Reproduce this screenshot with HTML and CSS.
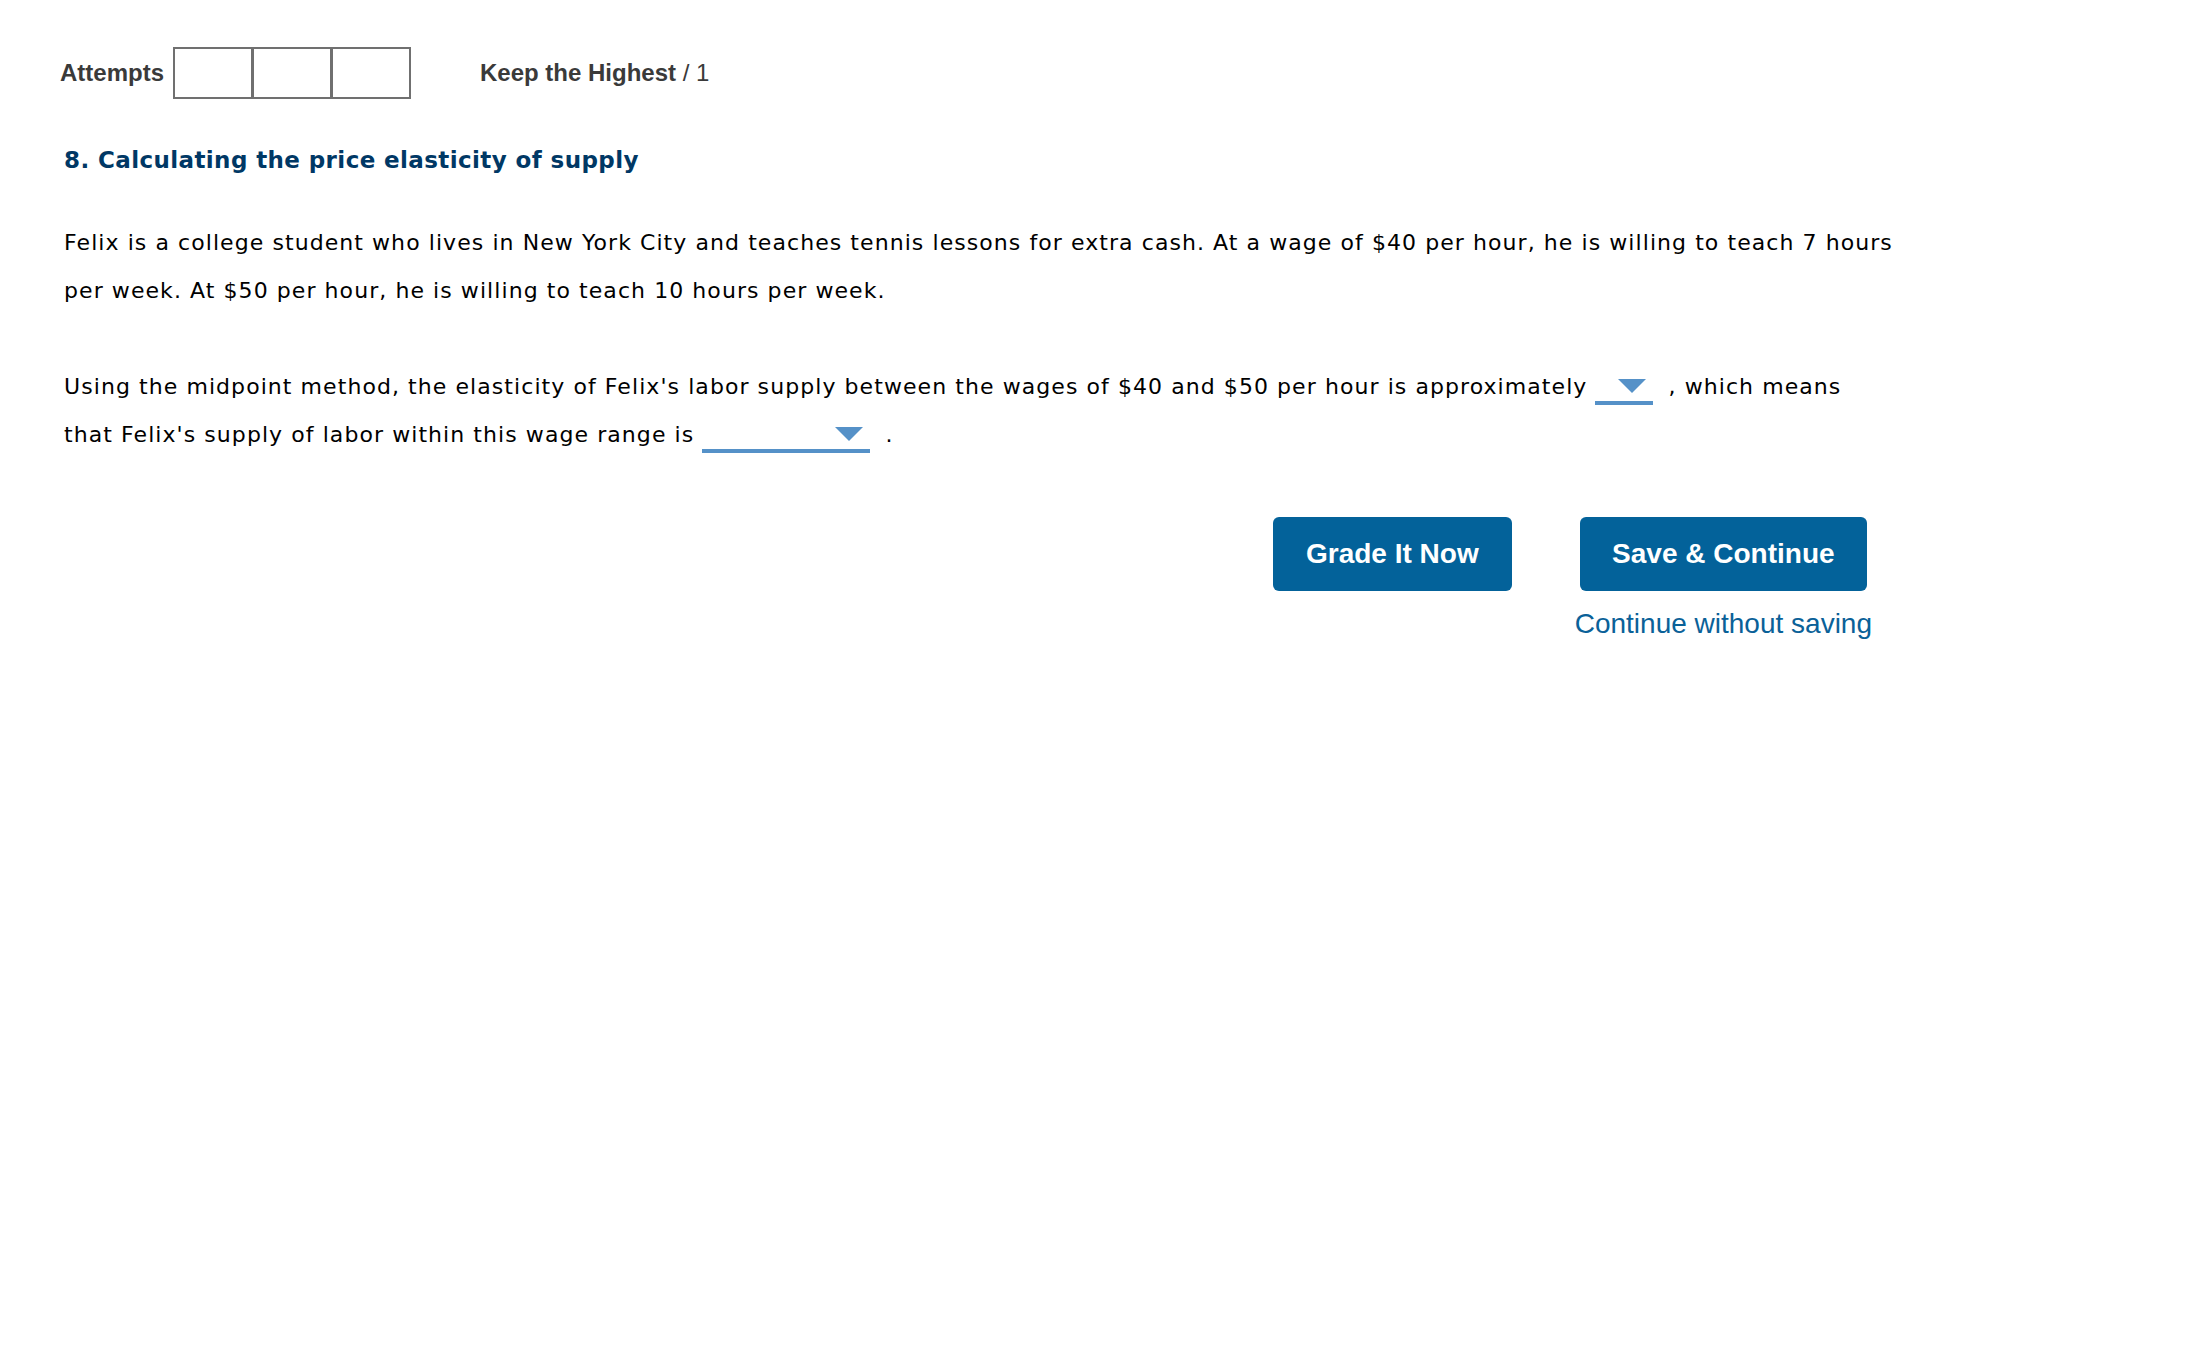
FILE: index.html
```html
<!DOCTYPE html>
<html lang="en">
<head>
  <meta charset="UTF-8" />
  <meta name="viewport" content="width=device-width, initial-scale=1.0" />
  <title>Price Elasticity of Supply</title>
  <link rel="stylesheet" href="styles.css">
</head>
<body>
  <div class="attempts-bar">
    <span class="attempts-label">Attempts</span>
    <div class="attempt-boxes">
      <span class="attempt-box"></span>
      <span class="attempt-box"></span>
      <span class="attempt-box"></span>
    </div>
    <span class="scoring"><strong>Keep the Highest</strong> / 1</span>
  </div>

  <div class="question">
    <h2>8. Calculating the price elasticity of supply</h2>

    <p>Felix is a college student who lives in New York City and teaches tennis lessons for extra cash. At a wage of $40 per hour, he is willing to teach 7 hours per week. At $50 per hour, he is willing to teach 10 hours per week.</p>

    <p>Using the midpoint method, the elasticity of Felix's labor supply between the wages of $40 and $50 per hour is approximately <span class="dropdown small"><span class="caret"></span></span> , which means that Felix's supply of labor within this wage range is <span class="dropdown wide"><span class="caret"></span></span> .</p>

    <div class="actions">
      <button class="btn">Grade It Now</button>
      <div class="save-col">
        <button class="btn">Save &amp; Continue</button>
        <a href="#" class="skip-link">Continue without saving</a>
      </div>
    </div>
  </div>
</body>
</html>
```

FILE: styles.css
```css
body {
  margin: 0;
  background: #fff;
  font-family: "DejaVu Sans", Verdana, sans-serif;
  color: #000;
}
.attempts-bar {
  display: flex;
  align-items: center;
  padding: 47px 0 0 60px;
  font-family: "Liberation Sans", Arial, sans-serif;
  font-size: 24px;
  color: #3a3a3a;
}
.attempts-label {
  font-weight: bold;
  margin-right: 9px;
}
.attempt-boxes {
  display: flex;
}
.attempt-box {
  width: 76px;
  height: 48px;
  border: 2px solid #707070;
}
.attempt-box + .attempt-box {
  margin-left: -1px;
}
.scoring {
  margin-left: 69px;
}
.question {
  padding-left: 64px;
  width: 1832px;
}
h2 {
  margin: 46px 0 0;
  font-size: 23px;
  letter-spacing: 0.4px;
  line-height: 30px;
  color: #003865;
}
p {
  margin: 44px 0 0;
  font-size: 22px;
  letter-spacing: 1.07px;
  line-height: 48px;
}
p + p {
  margin-top: 48px;
}
.dropdown {
  display: inline-block;
  box-sizing: border-box;
  overflow: hidden;
  height: 26px;
  padding-right: 7px;
  border-bottom: 4px solid #5591c8;
  vertical-align: -11px;
  margin-right: 7px;
}
.dropdown.small { width: 58px; }
.dropdown.wide { width: 168px; }
.caret {
  display: block;
  width: 0;
  margin-left: auto;
  border-left: 14px solid transparent;
  border-right: 14px solid transparent;
  border-top: 14px solid #5591c8;
}
.actions {
  display: flex;
  justify-content: flex-end;
  align-items: flex-start;
  gap: 63px;
  margin-top: 58px;
  padding-right: 24px;
}
.save-col {
  display: flex;
  flex-direction: column;
  align-items: center;
}
.btn {
  height: 74px;
  padding: 0 33px;
  background: #03629a;
  color: #fff;
  border: none;
  border-radius: 6px;
  font-family: "Liberation Sans", Arial, sans-serif;
  font-size: 28px;
  font-weight: bold;
  cursor: pointer;
}
.save-col .btn {
  padding: 0 32px;
}
.skip-link {
  margin-top: 17px;
  font-family: "Liberation Sans", Arial, sans-serif;
  font-size: 28px;
  color: #0a6198;
  text-decoration: none;
}
```
